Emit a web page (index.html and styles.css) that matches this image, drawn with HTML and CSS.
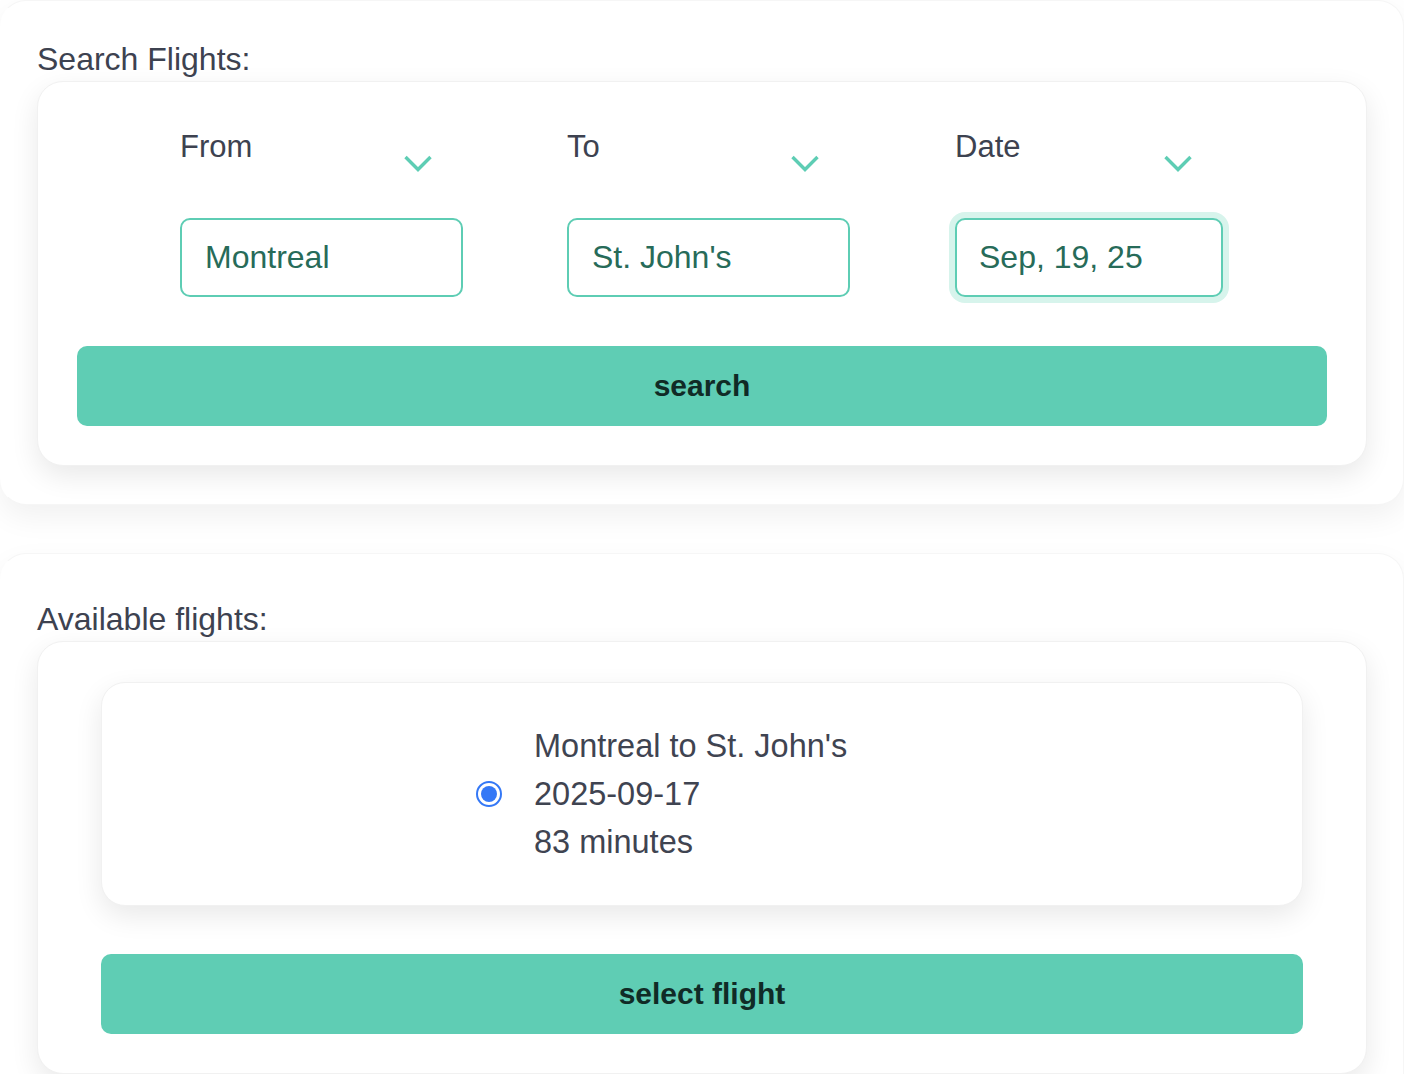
FILE: index.html
```html
<!DOCTYPE html>
<html lang="en">
<head>
<meta charset="utf-8">
<title>Flights</title>
<link rel="stylesheet" href="styles.css">
</head>
<body>
  <section class="panel panel-search">
    <h2 class="panel-title">Search Flights:</h2>
    <div class="card card-search">
      <div class="fields">
        <div class="field">
          <div class="field-head">
            <span class="field-label">From</span>
            <svg class="chevron" width="28" height="17" viewBox="0 0 28 17"><polyline points="1.5,2 14,14.5 26.5,2" fill="none" stroke="#5ecdb4" stroke-width="3.4"/></svg>
          </div>
          <div class="input">Montreal</div>
        </div>
        <div class="field">
          <div class="field-head">
            <span class="field-label">To</span>
            <svg class="chevron" width="28" height="17" viewBox="0 0 28 17"><polyline points="1.5,2 14,14.5 26.5,2" fill="none" stroke="#5ecdb4" stroke-width="3.4"/></svg>
          </div>
          <div class="input">St. John's</div>
        </div>
        <div class="field field-date">
          <div class="field-head">
            <span class="field-label">Date</span>
            <svg class="chevron" width="28" height="17" viewBox="0 0 28 17"><polyline points="1.5,2 14,14.5 26.5,2" fill="none" stroke="#5ecdb4" stroke-width="3.4"/></svg>
          </div>
          <div class="input input-focus">Sep, 19, 25</div>
        </div>
      </div>
      <button class="btn" type="button">search</button>
    </div>
  </section>

  <section class="panel panel-results">
    <h2 class="panel-title">Available flights:</h2>
    <div class="card card-results">
      <label class="flight">
        <input class="radio" type="radio" name="flight" checked>
        <span class="flight-info">
          <span class="flight-line">Montreal to St. John's</span>
          <span class="flight-line">2025-09-17</span>
          <span class="flight-line">83 minutes</span>
        </span>
      </label>
      <button class="btn" type="button">select flight</button>
    </div>
  </section>
</body>
</html>
```

FILE: styles.css
```css
* { box-sizing: border-box; }

html, body {
  margin: 0;
  padding: 0;
  background: #ffffff;
}

body {
  font-family: "Liberation Sans", Arial, sans-serif;
  color: #3f4451;
  width: 1404px;
}

.panel {
  background: #ffffff;
  border: 1px solid #f6f6f6;
  border-left-color: transparent;
  border-radius: 26px;
  box-shadow: 0 12px 30px rgba(0, 0, 0, 0.06);
  padding: 40px 36px 38px 36px;
}

.panel-results {
  margin-top: 48px;
  padding-top: 47px;
}

.panel-title {
  margin: 0 0 4px 0;
  font-size: 32px;
  line-height: 36px;
  font-weight: normal;
  color: #3d4250;
}

.card {
  background: #ffffff;
  border: 1px solid #f1f1f1;
  border-radius: 26px;
  box-shadow: 0 10px 28px rgba(0, 0, 0, 0.09);
}

.card-search {
  padding: 47px 39px 39px 39px;
}

.fields {
  display: grid;
  grid-template-columns: 387px 388px 268px;
  padding-left: 103px;
  margin-bottom: 49px;
}

.field {
  width: 283px;
}

.field-date {
  width: 268px;
}

.field-head {
  height: 89px;
  display: flex;
  justify-content: space-between;
  align-items: flex-start;
}

.field-label {
  font-size: 31px;
  line-height: 36px;
  color: #3d4250;
}

.chevron {
  display: block;
  margin-top: 26px;
  margin-right: 31px;
}

.input {
  height: 79px;
  border: 2px solid #5ecdb4;
  border-radius: 10px;
  padding: 0 23px;
  display: flex;
  align-items: center;
  font-size: 32px;
  color: #276b59;
  background: #ffffff;
}

.input-focus {
  box-shadow: 0 0 0 6px #d7f4ec;
  padding-left: 22px;
}

.btn {
  display: block;
  width: 100%;
  height: 80px;
  border: none;
  border-radius: 10px;
  background: #5fcdb4;
  font-family: "Liberation Sans", Arial, sans-serif;
  font-size: 30px;
  font-weight: bold;
  color: #102b26;
  cursor: pointer;
}

.card-results {
  padding: 40px 63px 39px 63px;
}

.flight {
  display: flex;
  align-items: center;
  height: 224px;
  padding-left: 374px;
  border: 1px solid #f1f1f1;
  border-radius: 24px;
  box-shadow: 0 10px 28px rgba(0, 0, 0, 0.09);
  margin-bottom: 48px;
  background: #ffffff;
}

.radio {
  appearance: none;
  -webkit-appearance: none;
  margin: 0;
  width: 26px;
  height: 26px;
  border: 2px solid #3478f6;
  border-radius: 50%;
  background: #ffffff;
  display: flex;
  align-items: center;
  justify-content: center;
  flex: none;
}

.radio::after {
  content: "";
  width: 16px;
  height: 16px;
  border-radius: 50%;
  background: #3478f6;
}

.flight-info {
  display: flex;
  flex-direction: column;
  margin-left: 32px;
}

.flight-line {
  font-size: 32.5px;
  line-height: 48px;
  color: #3f4451;
}
```
